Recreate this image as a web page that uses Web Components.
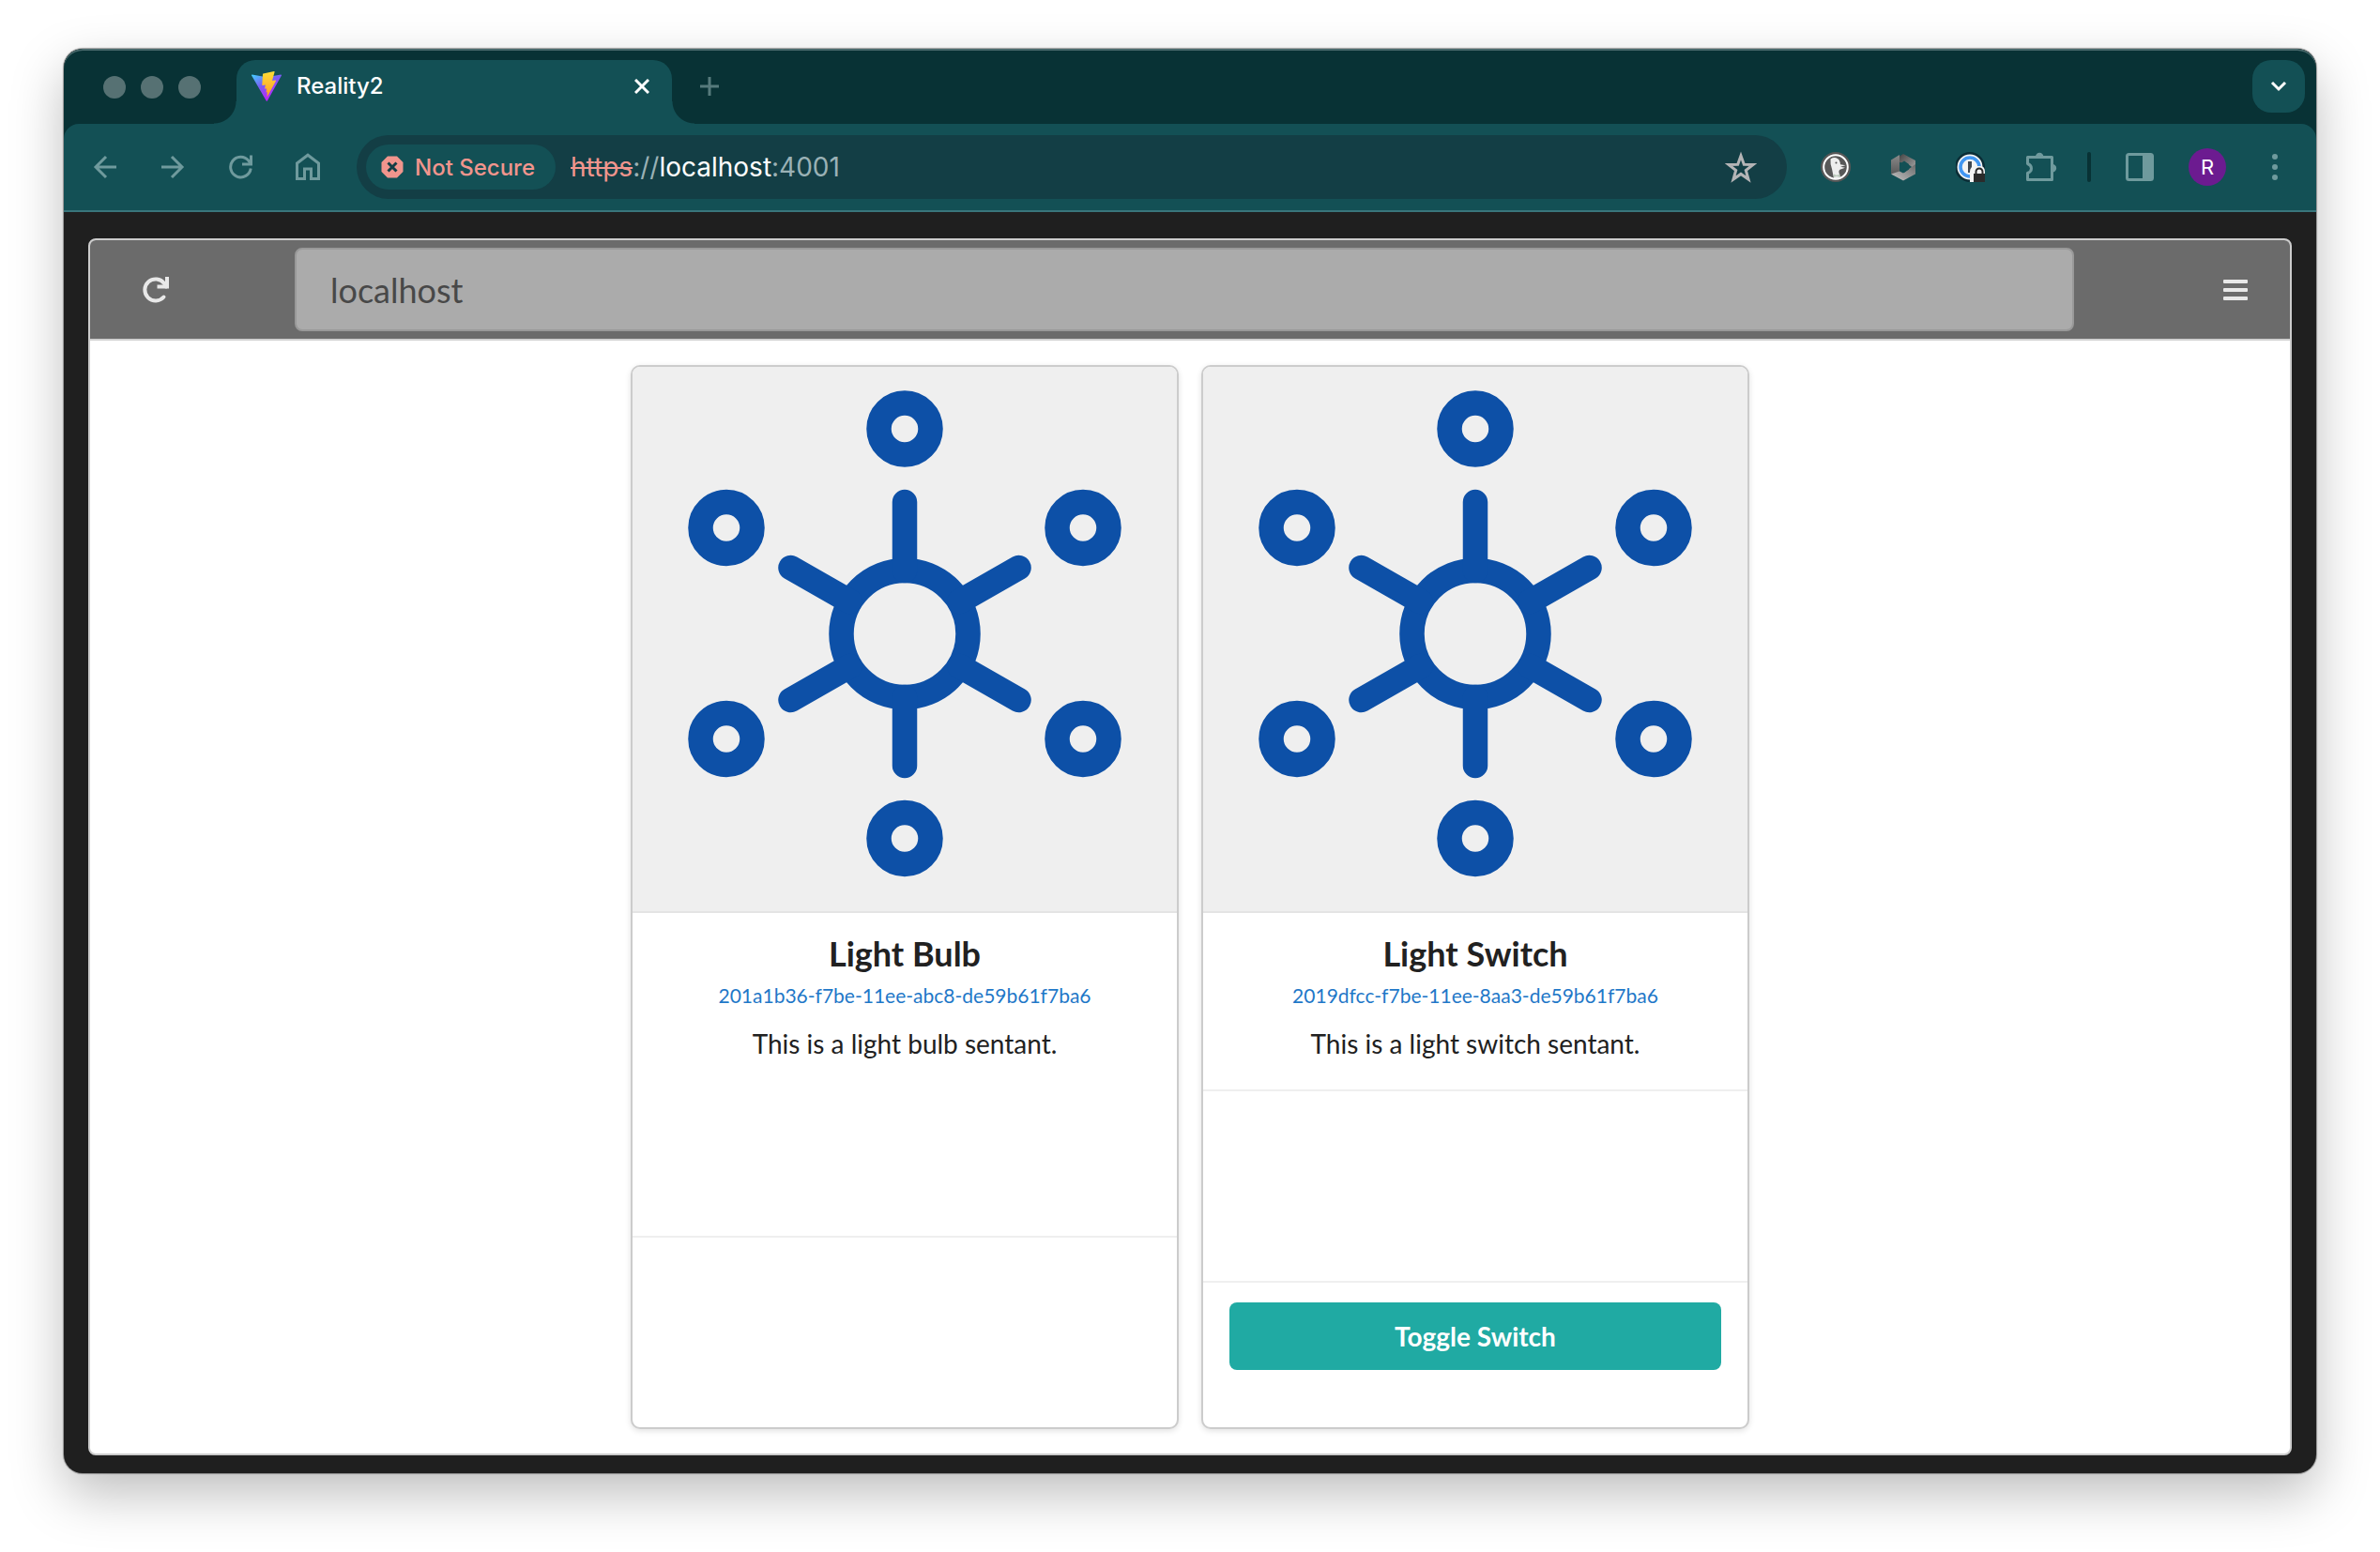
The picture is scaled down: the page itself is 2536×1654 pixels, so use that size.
<!DOCTYPE html>
<html lang="en">
<head>
<meta charset="utf-8">
<title>Reality2</title>
<style>
  body { margin: 0; background: #fff; font-family: Inter, "Liberation Sans", sans-serif; }
</style>
</head>
<body>
<browser-window>
  <tab-strip slot="tabs"><span slot="title">Reality2</span></tab-strip>
  <nav-toolbar slot="toolbar"></nav-toolbar>
  <app-frame host="localhost">
    <sentant-card name="Light Bulb" uid="201a1b36-f7be-11ee-abc8-de59b61f7ba6">This is a light bulb sentant.</sentant-card>
    <sentant-card name="Light Switch" uid="2019dfcc-f7be-11ee-8aa3-de59b61f7ba6" action="Toggle Switch">This is a light switch sentant.</sentant-card>
  </app-frame>
</browser-window>

<script>
const reset = `
  :host, *, *::before, *::after { box-sizing: border-box; }
  button { margin: 0; padding: 0; border: 0; background: none; color: inherit; font: inherit; cursor: pointer; }
  svg { display: block; }
`;

class BaseElement extends HTMLElement {
  connectedCallback() {
    if (this.shadowRoot) return;
    const t = document.createElement('template');
    t.innerHTML = `<style>${reset}${this.styles()}</style>${this.markup()}`;
    this.attachShadow({ mode: 'open' }).append(t.content.cloneNode(true));
  }
}

/* The window: rounded frame and its drop shadow */
class BrowserWindow extends BaseElement {
  styles() { return `
    :host { display: block; padding: 52px 68px 84px; }
    .window {
      display: flex; flex-direction: column; overflow: hidden;
      border-radius: 20px; background: #1f1f1f;
      box-shadow: 0 0 1px 1px rgba(0,0,0,.35), 0 22px 56px rgba(0,0,0,.26);
    }
    .chrome { background: #083235; box-shadow: inset 0 2px #48686b; border-radius: 20px 20px 0 0; }
    main { padding: 28px 26px 19px; }
  `; }
  markup() { return `
    <div class="window">
      <header class="chrome"><slot name="tabs"></slot><slot name="toolbar"></slot></header>
      <main><slot></slot></main>
    </div>`; }
}

class TabStrip extends BaseElement {
  styles() { return `
    :host { display: flex; align-items: stretch; height: 80px; padding: 12px 12px 0 42px; }
    .lights { display: flex; align-items: center; gap: 16px; width: 142px; padding-bottom: 10px; }
    .lights i { width: 24px; height: 24px; border-radius: 50%; background: #567173; }
    .tab {
      position: relative; display: flex; align-items: center; width: 464px; padding: 0 24px 12px 16px;
      border-radius: 20px 20px 0 0; background: #135055; color: #fff;
    }
    .tab::before, .tab::after { content: ""; position: absolute; bottom: 0; width: 24px; height: 24px; }
    .tab::before { right: 100%; background: radial-gradient(circle at 0 0, transparent 23px, #135055 24px); }
    .tab::after { left: 100%; background: radial-gradient(circle at 100% 0, transparent 23px, #135055 24px); }
    .title { flex: 1; padding-left: 16px; font-size: 24px; font-weight: 500; line-height: 32px; }
    .new { display: flex; align-items: center; padding: 0 0 12px 30px; color: #567a7c; }
    .search {
      display: grid; place-items: center; width: 56px; height: 56px; margin-left: auto;
      border-radius: 20px; background: #135055; color: #fff;
    }
  `; }
  markup() { return `
    <div class="lights"><i></i><i></i><i></i></div>
    <div class="tab">
      <svg width="32" height="32" viewBox="0 0 32 32" aria-hidden="true">
        <defs>
          <linearGradient id="v" x1="0" y1="0" x2=".6" y2="1"><stop stop-color="#41d1ff"/><stop offset=".45" stop-color="#7a5cf5"/><stop offset="1" stop-color="#c21cfb"/></linearGradient>
          <linearGradient id="b" x1="0" y1="0" x2="0" y2="1"><stop stop-color="#ffdd35"/><stop offset="1" stop-color="#ff9a28"/></linearGradient>
        </defs>
        <path d="M.6 3.6 16 6.3 31.4 3.6Q32.3 3.6 31.9 4.6L17 31.3Q16.3 32.4 15.6 31.3L.1 4.6Q-.2 3.6.6 3.6Z" fill="url(#v)"/>
        <path d="M24 .1 12.4 2.4Q12 2.5 12 2.9L11.3 14.6Q11.3 15.2 11.9 15.1L14.9 14.4 14 18.8 16 18.3Q16 21 15.4 22.4L16.7 22 16.6 27.5 26 10.2Q26.2 9.4 25.4 9.4L22 10 24.6.7Q24.7 0 24 .1Z" fill="url(#b)"/>
      </svg>
      <span class="title"><slot name="title"></slot></span>
      <button aria-label="Close tab">
        <svg width="16" height="16" viewBox="0 0 16 16" fill="none" stroke="currentColor" stroke-width="3"><path d="m1 1 14 14M15 1 1 15"/></svg>
      </button>
    </div>
    <button class="new" aria-label="New tab">
      <svg width="20" height="20" viewBox="0 0 20 20" fill="none" stroke="currentColor" stroke-width="3"><path d="M10 0v20M0 10h20"/></svg>
    </button>
    <button class="search" aria-label="Search tabs">
      <svg width="18" height="12" viewBox="0 0 18 12" fill="none" stroke="currentColor" stroke-width="3"><path d="m2 2 7 7 7-7"/></svg>
    </button>`; }
}

class NavToolbar extends BaseElement {
  styles() { return `
    :host {
      display: flex; align-items: center; height: 94px; padding: 0 28px;
      border-bottom: 2px solid #39757b; border-radius: 16px 16px 0 0; background: #135055; color: #6f9a9d;
    }
    nav { display: flex; gap: 40px; }
    nav button, .tools button { display: grid; place-items: center; width: 32px; height: 40px; }
    .omnibox {
      flex: 1; display: flex; align-items: center; height: 68px; margin: 0 36px; padding: 0 32px 0 10px;
      border-radius: 34px; background: #133e45;
    }
    .chip {
      display: flex; align-items: center; gap: 12px; height: 48px; padding: 0 22px 0 16px; border-radius: 24px;
      background: #135055; color: #f1958d; font-size: 24px; font-weight: 500;
    }
    .url { flex: 1; padding-left: 16px; font-size: 28px; line-height: 36px; color: #9ab1b5; }
    .url s { color: #f1958d; }
    .url b { font-weight: 400; color: #fff; }
    .star { color: #b4b4b6; }
    .tools { display: flex; align-items: center; gap: 40px; }
    .tools hr { width: 4px; height: 32px; margin: 0 -4px; border: 0; border-radius: 2px; background: #083235; }
    .tools .avatar { width: 40px; border-radius: 50%; margin: 0 -4px; background: #6c1b90; color: #fff; font-size: 22px; }
  `; }
  markup() { return `
    <nav>
      <button aria-label="Back"><svg width="32" height="32" viewBox="0 0 32 32" fill="none" stroke="currentColor" stroke-width="3"><path d="M28 16H6M17 5 6 16l11 11"/></svg></button>
      <button aria-label="Forward"><svg width="32" height="32" viewBox="0 0 32 32" fill="none" stroke="currentColor" stroke-width="3"><path d="M4 16h22M15 5l11 11-11 11"/></svg></button>
      <button aria-label="Reload"><svg width="32" height="32" viewBox="0 0 32 32" fill="none" stroke="currentColor" stroke-width="3"><path d="M27.200 17.500A10.800 10.800 0 1 1 25 9.400l2 3"/><path d="M27.500 3.500V13H18"/></svg></button>
      <button aria-label="Home"><svg width="32" height="32" viewBox="0 0 32 32" fill="none" stroke="currentColor" stroke-width="3"><path d="M4.500 12 16 3.200 27.500 12v16.500h-8V18h-7v10.500h-8z"/></svg></button>
    </nav>
    <div class="omnibox">
      <button class="chip">
        <svg width="24" height="24" viewBox="0 0 24 24" aria-hidden="true"><path d="M7 .5h10L23.500 7v10L17 23.500H7L.5 17V7z" fill="#f1958d"/><path d="m7.500 7.500 9 9m0-9-9 9" stroke="#133e45" stroke-width="3"/></svg>
        <span>Not Secure</span>
      </button>
      <div class="url"><s>https</s>://<b>localhost</b>:4001</div>
      <button class="star" aria-label="Bookmark this page"><svg width="34" height="34" viewBox="0 0 34 34" fill="none" stroke="currentColor" stroke-width="3"><path d="m17 5 3.300 9.200 9.700.3-7.700 6 2.700 9.500-8-5.600L9 30l2.700-9.500-7.700-6 9.700-.3z"/></svg></button>
    </div>
    <div class="tools">
      <button aria-label="Privacy extension"><svg width="32" height="32" viewBox="0 0 32 32">
        <circle cx="16" cy="16" r="16" fill="#585858"/><circle cx="16" cy="16" r="12.800" fill="#585858" stroke="#fff" stroke-width="2"/>
        <path d="M10.500 7.500q3-2 6-1.200 4 1.200 4.500 7l5.500 1-5.500 1.500 5 1-5.500 2q-1.500.8-1 3l1.500 6q-3.500 1.200-7 .3l-2-10q-2-5-1.500-10.600z" fill="#eee"/><circle cx="16.500" cy="11.500" r="1" fill="#555"/><path d="m14 23.500 3 1.200 3.500-1.200v3.500L17 26l-3 1z" fill="#bccbbd"/>
      </svg></button>
      <button aria-label="Ribbon extension"><svg width="32" height="32" viewBox="0 0 32 32">
        <defs>
          <linearGradient id="r1" x1="0" y1="0" x2="0" y2="1"><stop stop-color="#8a8a8a"/><stop offset="1" stop-color="#555"/></linearGradient>
          <linearGradient id="r2" x1="0" y1="0" x2="1" y2="1"><stop stop-color="#444"/><stop offset="1" stop-color="#a5a5a5"/></linearGradient>
          <linearGradient id="r3" x1="0" y1="1" x2="1" y2="0"><stop stop-color="#c4c4c4"/><stop offset="1" stop-color="#6a6a6a"/></linearGradient>
        </defs>
        <path d="M3 8.500 12 3v20l-6 2-3-2z" fill="url(#r1)"/><path d="M12 4.500 16 2l13 7v10l-9-7-8-1z" fill="url(#r2)"/><path d="M29 13v10.500L16 30.500 3 23.500l9-3 4 2z" fill="url(#r3)"/><path d="m12 13 5-3.500 5 3.500v5.500L17 22l-5-3z" fill="#135055"/>
      </svg></button>
      <button aria-label="Password extension"><svg width="32" height="32" viewBox="0 0 32 32">
        <circle cx="15" cy="16" r="16" fill="#0b2d36"/><circle cx="15" cy="16" r="13.500" fill="#f4f4f4"/><circle cx="15" cy="16" r="10" fill="none" stroke="#4297f2" stroke-width="3.600"/><rect x="13" y="10" width="4" height="12" fill="#3e4650"/>
        <path d="M15 32V21q0-6 6-6h5q5 0 5 6v11z" fill="#f4f4f4"/><path d="M19 23h12v9H19z" fill="#2b2b2b"/><path d="M21.500 24v-3a3.500 3.500 0 0 1 7 0v3" fill="none" stroke="#2b2b2b" stroke-width="2"/>
      </svg></button>
      <button aria-label="Extensions"><svg width="36" height="34" viewBox="0 0 36 34">
        <path d="M4.500 6.500h26v24h-26v-7q4-1.500 4-5t-4-5z" fill="none" stroke="currentColor" stroke-width="3" stroke-linejoin="round"/><path d="M13 6a4.200 4.200 0 0 1 8.400 0zM31 14a4.200 4.200 0 0 1 0 8.400z" fill="currentColor"/>
      </svg></button>
      <hr>
      <button aria-label="Side panel"><svg width="30" height="30" viewBox="0 0 30 30"><rect x="1.500" y="1.500" width="27" height="27" rx="2" fill="none" stroke="currentColor" stroke-width="3"/><path d="M18 2h10v26H18z" fill="currentColor"/></svg></button>
      <button class="avatar" aria-label="Profile R">R</button>
      <button aria-label="Menu"><svg width="32" height="32" viewBox="0 0 32 32" fill="currentColor"><circle cx="16" cy="5" r="3"/><circle cx="16" cy="16" r="3"/><circle cx="16" cy="27" r="3"/></svg></button>
    </div>`; }
}

/* The web app: a header with the host field, over a row of cards */
class AppFrame extends BaseElement {
  styles() { return `
    :host { display: block; overflow: hidden; border: 2px solid #ccc; border-radius: 8px; background: #fff; font-family: Lato, "Liberation Sans", sans-serif; }
    header { display: flex; align-items: center; padding: 8px 0; border-bottom: 2px solid #d0d0d0; background: #6b6b6b; color: #e8e8e8; }
    header button { display: grid; place-items: center; width: 88px; height: 72px; }
    header button:first-child { margin-left: 26px; margin-right: 104px; }
    header button:last-child { margin-left: 128px; margin-right: 14px; }
    input {
      flex: 1; min-width: 0; height: 89px; padding: 0 36px; border: 2px solid #999; border-radius: 8px;
      background: #ababab; color: #484848; font: 36px/44px Lato, "Liberation Sans", sans-serif;
    }
    section { display: flex; justify-content: center; gap: 24px; padding: 26px; }
  `; }
  markup() { return `
    <header>
      <button aria-label="Reload sentants"><svg width="30" height="30" viewBox="0 0 30 30" fill="none" stroke="currentColor" stroke-width="4"><path d="M23.500 22.500A11.500 11.500 0 1 1 24 8l2 3.500" stroke-linecap="round"/><path d="M27 1V11.500H16.500"/></svg></button>
      <input type="text" aria-label="Host" value="${this.getAttribute('host')}">
      <button aria-label="Menu"><svg width="26" height="24" viewBox="0 0 26 24" fill="currentColor"><rect y="1" width="26" height="4" rx="1"/><rect y="10" width="26" height="4" rx="1"/><rect y="19" width="26" height="4" rx="1"/></svg></button>
    </header>
    <section><slot></slot></section>`; }
}

class SentantCard extends BaseElement {
  styles() { return `
    :host {
      display: flex; flex-direction: column; width: 584px; overflow: hidden; text-align: center;
      border: 2px solid #ccc; border-radius: 10px; background: #fff; color: #212121;
      box-shadow: 0 2px 6px rgba(0,0,0,.12);
    }
    .image { border-bottom: 2px solid #e4e4e4; background: #efefef; }
    .image svg { width: 100%; height: auto; }
    .content { flex: 1; min-height: 188px; padding: 19px 28px 0; }
    h2 { margin: 0; font-size: 36px; line-height: 48px; font-weight: 700; }
    a { display: block; color: #1f78c8; font-size: 21px; line-height: 42px; text-decoration: none; }
    p { margin: 0; padding-top: 8px; font-size: 28px; line-height: 44px; }
    .extra { border-top: 2px solid #efefef; min-height: 204px; }
    .actions { min-height: 156px; padding: 21px 28px; }
    .actions button { display: block; width: 100%; height: 72px; border-radius: 8px; background: #20aaa3; color: #fff; font-size: 28px; font-weight: 700; }
  `; }
  markup() {
    const action = this.getAttribute('action');
    return `
    <div class="image">
      <svg viewBox="0 0 580 580" fill="none" stroke="#0d50a7" stroke-width="26.500" stroke-linecap="round" role="img" aria-label="Sentant">
        <circle cx="290" cy="284.500" r="67.500"/>
        <path d="M290 144v73M290 352v73M168.500 214l63 36M348.500 319l63 36M411.500 214l-63 36M231.500 319l-63 36"/>
        <circle cx="290" cy="66" r="27.500"/><circle cx="290" cy="502.500" r="27.500"/>
        <circle cx="100" cy="171.500" r="27.500"/><circle cx="480" cy="171.500" r="27.500"/>
        <circle cx="100" cy="396.500" r="27.500"/><circle cx="480" cy="396.500" r="27.500"/>
      </svg>
    </div>
    <div class="content">
      <h2>${this.getAttribute('name')}</h2>
      <a href="#">${this.getAttribute('uid')}</a>
      <p><slot></slot></p>
    </div>
    <div class="extra"></div>
    ${action ? `<div class="extra actions"><button>${action}</button></div>` : ''}`;
  }
}

customElements.define('browser-window', BrowserWindow);
customElements.define('tab-strip', TabStrip);
customElements.define('nav-toolbar', NavToolbar);
customElements.define('app-frame', AppFrame);
customElements.define('sentant-card', SentantCard);
</script>
</body>
</html>
